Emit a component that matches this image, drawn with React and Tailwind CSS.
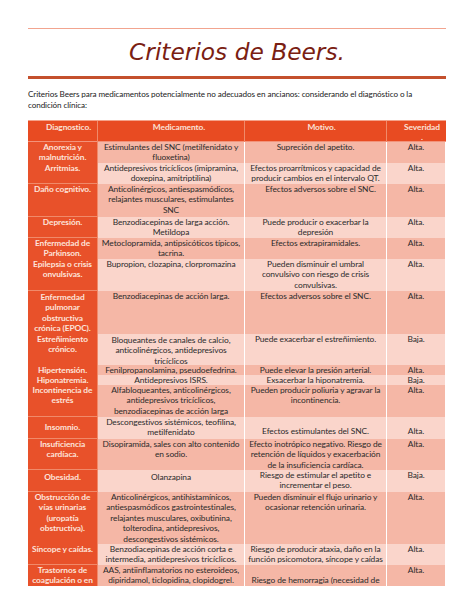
const ROWS = [
  { h: 'h-[21px]', dx: ['Anorexia y', 'malnutrición.'], med: ['Estimulantes del SNC (metilfenidato y', 'fluoxetina)'], mot: ['Supreción del apetito.'], sev: 'Alta.' },
  { h: 'h-[21px]', dx: ['Arritmias.'], med: ['Antidepresivos tricíclicos (imipramina,', 'doxepina, amitriptilina)'], mot: ['Efectos proarrítmicos y capacidad de', 'producir cambios en el intervalo QT.'], sev: 'Alta.' },
  { h: 'h-[33px]', dx: ['Daño cognitivo.'], med: ['Anticolinérgicos, antiespasmódicos,', 'relajantes musculares, estimulantes', 'SNC'], mot: ['Efectos adversos sobre el SNC.'], sev: 'Alta.', motPad: 'pl-[10px]' },
  { h: 'h-[21px]', dx: ['Depresión.'], med: ['Benzodiacepinas de larga acción.', 'Metildopa'], mot: ['Puede producir o exacerbar la', 'depresión'], sev: 'Alta.' },
  { h: 'h-[21px]', dx: ['Enfermedad de', 'Parkinson.'], med: ['Metoclopramida, antipsicóticos típicos,', 'tacrina.'], mot: ['Efectos extrapiramidales.'], sev: 'Alta.' },
  { h: 'h-[32px]', dx: ['Epilepsia o crisis', 'onvulsivas.'], med: ['Bupropion, clozapina, clorpromazina'], mot: ['Pueden disminuir el umbral', 'convulsivo con riesgo de crisis', 'convulsivas.'], sev: 'Alta.' },
  { h: 'h-[43px]', dx: ['Enfermedad', 'pulmonar', 'obstructiva', 'crónica (EPOC).'], med: ['Benzodiacepinas de acción larga.'], mot: ['Efectos adversos sobre el SNC.'], sev: 'Alta.', dxPad: 'pt-[1px]' },
  { h: 'h-[31px]', dx: ['Estreñimiento', 'crónico.'], med: ['Bloqueantes de canales de calcio,', 'anticolinérgicos, antidepresivos', 'tricíclicos'], mot: ['Puede exacerbar el estreñimiento.'], sev: 'Baja.', medPad: 'pt-[1px]' },
  { h: 'h-[10px]', dx: ['Hipertensión.'], med: ['Fenilpropanolamina, pseudoefedrina.'], mot: ['Puede elevar la presión arterial.'], sev: 'Alta.' },
  { h: 'h-[10px]', dx: ['Hiponatremia.'], med: ['Antidepresivos ISRS.'], mot: ['Exsacerbar la hiponatremia.'], sev: 'Baja.' },
  { h: 'h-[32px]', dx: ['Incontinencia de', 'estrés'], med: ['Alfabloqueantes, anticolinérgicos,', 'antidepresivos tricíclicos,', 'benzodiacepinas de acción larga'], mot: ['Pueden producir poliuria y agravar la', 'incontinencia.'], sev: 'Alta.' },
  { h: 'h-[22px]', dx: ['Insomnio.'], med: ['Descongestivos sistémicos, teofilina,', 'metilfenidato'], mot: ['Efectos estimulantes del SNC.'], sev: 'Alta.', dxPad: 'pt-[5px]', motPad: 'pt-[9px]', sevPad: 'pt-[9px]' },
  { h: 'h-[31px]', dx: ['Insuficiencia', 'cardíaca.'], med: ['Disopiramida, sales con alto contenido', 'en sodio.'], mot: ['Efecto inotrópico negativo. Riesgo de', 'retención de líquidos y exacerbación', 'de la insuficiencia cardíaca.'], sev: 'Alta.' },
  { h: 'h-[22px]', dx: ['Obesidad.'], med: ['Olanzapina'], mot: ['Riesgo de estimular el apetito e', 'incrementar el peso.'], sev: 'Baja.', dxPad: 'pt-[2px]', medPad: 'pt-[2px]' },
  { h: 'h-[52px]', dx: ['Obstrucción de', 'vías urinarias', '(uropatía', 'obstructiva).'], med: ['Anticolinérgicos, antihistamínicos,', 'antiespasmódicos gastrointestinales,', 'relajantes musculares, oxibutinina,', 'tolterodina, antidepresivos,', 'descongestivos sistémicos.'], mot: ['Pueden disminuir el flujo urinario y', 'ocasionar retención urinaria.'], sev: 'Alta.' },
  { h: 'h-[21px]', dx: ['Síncope y caídas.'], med: ['Benzodiacepinas de acción corta e', 'intermedia, antidepresivos tricíclicos.'], mot: ['Riesgo de producir ataxia, daño en la', 'función psicomotora, síncope y caídas'], sev: 'Alta.' },
  { h: 'h-[21px]', dx: ['Trastornos de', 'coagulación o en'], med: ['AAS, antiinflamatorios no esteroideos,', 'dipiridamol, ticlopidina, clopidogrel.'], mot: ['Riesgo de hemorragia (necesidad de'], sev: 'Alta.', motPad: 'pt-[10px]' },
]

function Lines({ lines }) {
  return lines.map((l, k) => (
    <div key={k} className="whitespace-nowrap">
      {l}
    </div>
  ))
}

function Row({ r, i }) {
  const bg = i % 2 === 0 ? 'bg-[#f5b7a6]' : 'bg-[#fad5cb]'
  return (
    <div className={`grid grid-cols-[70px_147px_142px_58px] overflow-hidden ${r.h}`}>
      <div className={`bg-[#e8512a] border-r border-b border-[#f08a6a] text-center font-bold text-[#fde3da] ${r.dxPad || 'pt-0'}`}>
        <Lines lines={r.dx} />
      </div>
      <div className={`${bg} border-r border-white text-center ${r.medPad || 'pt-0'}`}>
        <Lines lines={r.med} />
      </div>
      <div className={`${bg} border-r border-white text-center ${r.motPad || 'pt-0'}`}>
        <Lines lines={r.mot} />
      </div>
      <div className={`${bg} text-center ${r.sevPad || 'pt-0'}`}>{r.sev}</div>
    </div>
  )
}

export default function App() {
  return (
    <div className="w-[474px] h-[613px] overflow-hidden bg-white" style={{ fontFamily: 'Lato, "Open Sans", sans-serif' }}>
      <div className="ml-[28px] w-[418px] pt-[28px]">
        <div className="h-px bg-[#f2a48f]" />
        <h1
          className="h-[47px] flex items-center justify-center text-[23.3px] italic text-[#7a2012]"
          style={{ fontFamily: '"DejaVu Sans", sans-serif' }}
        >
          Criterios de Beers.
        </h1>
        <div className="h-[3px] bg-[#c4502d]" />
        <p className="mt-[10px] text-[8.15px] leading-[10.8px] tracking-[-0.1px] text-[#222]">
          Criterios Beers para medicamentos potencialmente no adecuados en ancianos: considerando el diagnóstico o la
          <br />
          condición clínica:
        </p>
        <div className="mt-[9px] border-t border-[#f4a28a] text-[8.4px] leading-[10.6px] tracking-[-0.1px] text-[#2b2b2b]">
          <div className="grid grid-cols-[70px_147px_142px_58px] h-[21px] bg-[#e84b22] font-bold text-[#fbe2d8] border-b border-[#f3937a]">
            <div className="pl-3 pt-[1px] text-center border-r border-[#f08a6a]">Diagnostico.</div>
            <div className="pl-4 pt-[1px] text-center border-r border-[#f08a6a]">Medicamento.</div>
            <div className="pl-3 pt-[1px] text-center border-r border-[#f08a6a]">Motivo.</div>
            <div className="pl-3 pt-[1px] text-center">
              Severidad
              <br />.
            </div>
          </div>
          {ROWS.map((r, i) => (
            <Row key={i} r={r} i={i} />
          ))}
        </div>
      </div>
    </div>
  )
}
